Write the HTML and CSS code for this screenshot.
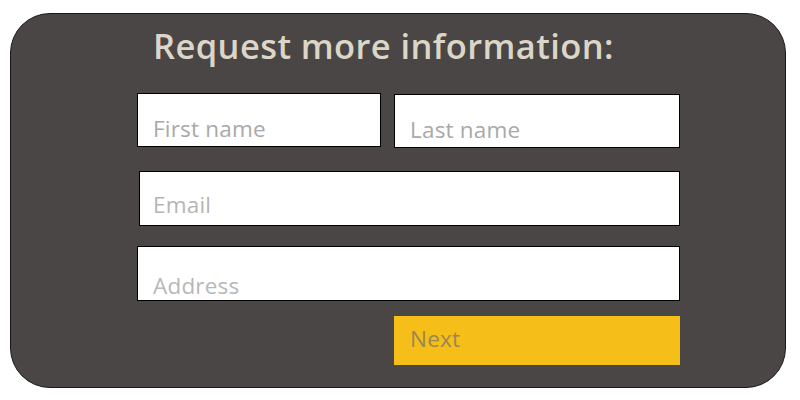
FILE: index.html
```html
<!DOCTYPE html>
<html>
<head>
<meta charset="utf-8">
<link rel="stylesheet" href="styles.css">
</head>
<body>
<div class="card">
  <h1 class="title">Request more information:</h1>
  <form class="form">
    <div class="row names">
      <div class="field first">First name</div>
      <div class="field last">Last name</div>
    </div>
    <div class="field email">Email</div>
    <div class="field address">Address</div>
    <div class="actions">
      <div class="next">Next</div>
    </div>
  </form>
</div>
</body>
</html>
```
FILE: styles.css
```css
* { box-sizing: border-box; }
html, body { margin: 0; padding: 0; background: #fff; }
body {
  width: 800px;
  height: 400px;
  padding: 13px 0 0 10px;
  font-family: "Open Sans", "Lato", sans-serif;
}
.card {
  width: 776px;
  height: 375px;
  background: #4a4645;
  border: 1px solid #1a1818;
  border-radius: 40px;
  padding: 0 0 0 126px;
}
.title {
  margin: 12px 0 0 16px;
  font-size: 34.5px;
  font-weight: 600;
  line-height: 40px;
  color: #dcd6c8;
  letter-spacing: 0.4px;
}
.form {
  width: 543px;
  margin-top: 27px;
  display: flex;
  flex-direction: column;
}
.row { display: flex; gap: 13px; align-items: flex-start; }
.field {
  background: #fff;
  border: 1px solid #000;
  color: #a9a9a9;
  font-size: 22.5px;
  line-height: 26px;
  padding: 22px 0 0 15px;
  letter-spacing: 0.2px;
}
.first { width: 244px; height: 54px; }
.last { width: 286px; height: 54px; margin-top: 1px; }
.email { width: 541px; height: 55px; margin: 23px 0 0 2px; padding-top: 20px; padding-left: 13px; color: #b5b5b5; }
.address { width: 543px; height: 55px; margin-top: 20px; padding-top: 26px; color: #b8b8b8; }
.actions { display: flex; justify-content: flex-end; margin-top: 15px; }
.next {
  width: 286px;
  height: 49px;
  background: #f6be18;
  color: #9c8753;
  font-size: 22.5px;
  line-height: 26px;
  padding: 10px 0 0 16px;
  letter-spacing: 0.2px;
}
```
